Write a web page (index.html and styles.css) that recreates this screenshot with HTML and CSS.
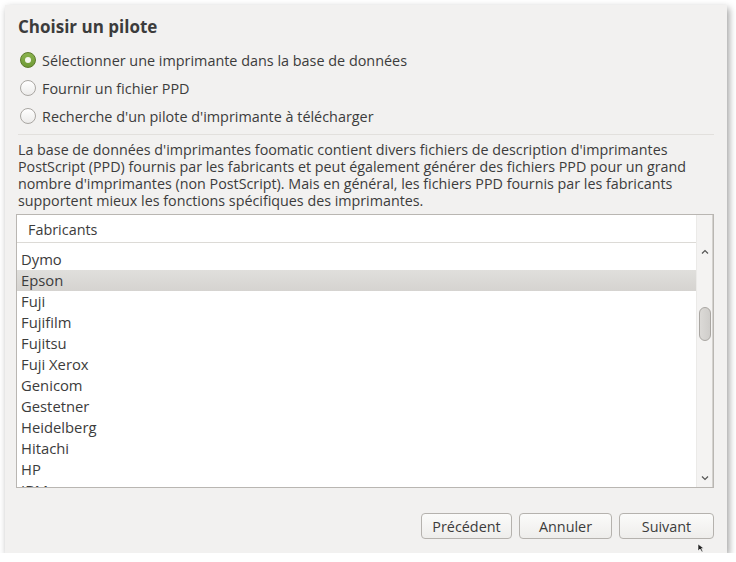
FILE: index.html
```html
<!DOCTYPE html>
<html>
<head>
<meta charset="utf-8">
<link rel="stylesheet" href="styles.css">
</head>
<body>
<div class="window">
  <h1 class="title">Choisir un pilote</h1>
  <div class="options">
    <label class="radio-row"><span class="radio checked"></span>Sélectionner une imprimante dans la base de données</label>
    <label class="radio-row"><span class="radio"></span>Fournir un fichier PPD</label>
    <label class="radio-row"><span class="radio"></span>Recherche d'un pilote d'imprimante à télécharger</label>
  </div>
  <div class="sep"></div>
  <p class="desc">La base de données d'imprimantes foomatic contient divers fichiers de description d'imprimantes<br>PostScript (PPD) fournis par les fabricants et peut également générer des fichiers PPD pour un grand<br>nombre d'imprimantes (non PostScript). Mais en général, les fichiers PPD fournis par les fabricants<br>supportent mieux les fonctions spécifiques des imprimantes.</p>
  <div class="listbox">
    <div class="list-main">
      <div class="list-header">Fabricants</div>
      <div class="rows">
        <div class="row">Dymo</div>
        <div class="row selected">Epson</div>
        <div class="row">Fuji</div>
        <div class="row">Fujifilm</div>
        <div class="row">Fujitsu</div>
        <div class="row">Fuji Xerox</div>
        <div class="row">Genicom</div>
        <div class="row">Gestetner</div>
        <div class="row">Heidelberg</div>
        <div class="row">Hitachi</div>
        <div class="row">HP</div>
        <div class="row">IBM</div>
      </div>
    </div>
    <div class="scrollbar">
      <div class="sb-head"></div>
      <div class="sb-track">
        <svg class="arrow" width="8" height="6" viewBox="0 0 8 6"><path d="M1 4.5 L4 1.5 L7 4.5" fill="none" stroke="#555" stroke-width="1.2"/></svg>
        <div class="thumb-space"><div class="thumb"></div></div>
        <svg class="arrow" width="8" height="6" viewBox="0 0 8 6"><path d="M1 1.5 L4 4.5 L7 1.5" fill="none" stroke="#555" stroke-width="1.2"/></svg>
      </div>
    </div>
  </div>
  <div class="buttons">
    <button class="btn">Précédent</button>
    <button class="btn">Annuler</button>
    <button class="btn">Suivant</button>
  </div>
  <svg class="cursor" width="8" height="10" viewBox="0 0 8 10"><path d="M1 1 L1 8 L3 6 L5 9 L6 8.5 L4.5 5.5 L7 5.5 Z" fill="#222" stroke="#fff" stroke-width="0.6"/></svg>
</div>
</body>
</html>
```
FILE: styles.css
```css
html, body {
  margin: 0;
  padding: 0;
  background: #ffffff;
}
body {
  font-family: "Open Sans", "Noto Sans", "DejaVu Sans", sans-serif;
  color: #3c3c3c;
  font-size: 14.4px;
}
.window {
  position: relative;
  box-sizing: border-box;
  margin: 5px 0 0 5px;
  width: 722px;
  height: 548px;
  background: #f2f1f0;
  box-shadow: 2px 3px 7px rgba(0,0,0,0.38);
  padding: 12px 13px 0 11px;
  display: flex;
  flex-direction: column;
}
.title {
  margin: 0 0 0 2px;
  font-size: 17px;
  font-weight: bold;
  line-height: 20px;
  color: #3c3c3c;
}
.options {
  margin-top: 9px;
  display: flex;
  flex-direction: column;
}
.radio-row {
  display: flex;
  align-items: center;
  height: 28px;
  gap: 6px;
  padding-left: 4px;
}
.radio {
  box-sizing: border-box;
  width: 16px;
  height: 16px;
  border-radius: 50%;
  border: 1px solid #a9a6a2;
  background: linear-gradient(#ffffff, #ecebea);
  flex: none;
  position: relative;
}
.radio.checked {
  border-color: #5c7a2a;
  background: linear-gradient(#8ab34e, #6f9a35);
}
.radio.checked::after {
  content: "";
  position: absolute;
  left: 4px;
  top: 4px;
  width: 6px;
  height: 6px;
  border-radius: 50%;
  background: #f4f6ee;
}
.sep {
  margin-top: 4px;
  height: 1px;
  background: #e2e0dd;
  margin-left: 2px;
}
.desc {
  margin: 6px 0 0 2px;
  line-height: 17px;
  font-size: 14.3px;
  white-space: nowrap;
}
.listbox {
  margin-top: 5px;
  box-sizing: border-box;
  height: 274px;
  border: 1px solid #b9b6b2;
  background: #ffffff;
  display: flex;
  overflow: hidden;
}
.list-main {
  flex: 1;
  display: flex;
  flex-direction: column;
  overflow: hidden;
}
.list-header {
  height: 28px;
  box-sizing: border-box;
  border-bottom: 1px solid #dcdad6;
  padding-left: 11px;
  padding-top: 1px;
  line-height: 27px;
  flex: none;
}
.rows {
  padding-top: 6px;
}
.row {
  height: 21px;
  line-height: 21px;
  padding-left: 4px;
  font-size: 14.8px;
}
.row.selected {
  background: linear-gradient(#e0dfdc, #d5d3d0);
}
.scrollbar {
  width: 15px;
  border-left: 1px solid #ebeae8;
  background: #f4f3f2;
  display: flex;
  flex-direction: column;
  border-right: 1px solid #d4d2ce;
}
.sb-head {
  height: 28px;
  flex: none;
}
.sb-track {
  flex: 1;
  display: flex;
  flex-direction: column;
  align-items: center;
  padding: 6px 0 6px;
}
.thumb-space {
  flex: 1;
  width: 100%;
  display: flex;
  justify-content: center;
  padding-top: 52px;
}
.thumb {
  box-sizing: border-box;
  width: 12px;
  height: 34px;
  border: 1px solid #a9a6a2;
  border-radius: 6px;
  background: linear-gradient(90deg, #dcdad7, #cfcdca);
}
.buttons {
  margin-top: auto;
  margin-bottom: 14px;
  display: flex;
  justify-content: flex-end;
  gap: 7px;
}
.btn {
  box-sizing: border-box;
  height: 26px;
  padding: 0;
  font-family: inherit;
  font-size: 14.4px;
  color: #3c3c3c;
  border: 1px solid #b5b2ae;
  border-radius: 4px;
  background: linear-gradient(#fbfbfa, #eeedeb);
}
.btn:nth-child(1) { width: 91px; }
.btn:nth-child(2) { width: 93px; }
.btn:nth-child(3) { width: 95px; }
.cursor {
  position: absolute;
  left: 692px;
  top: 538px;
}
```
